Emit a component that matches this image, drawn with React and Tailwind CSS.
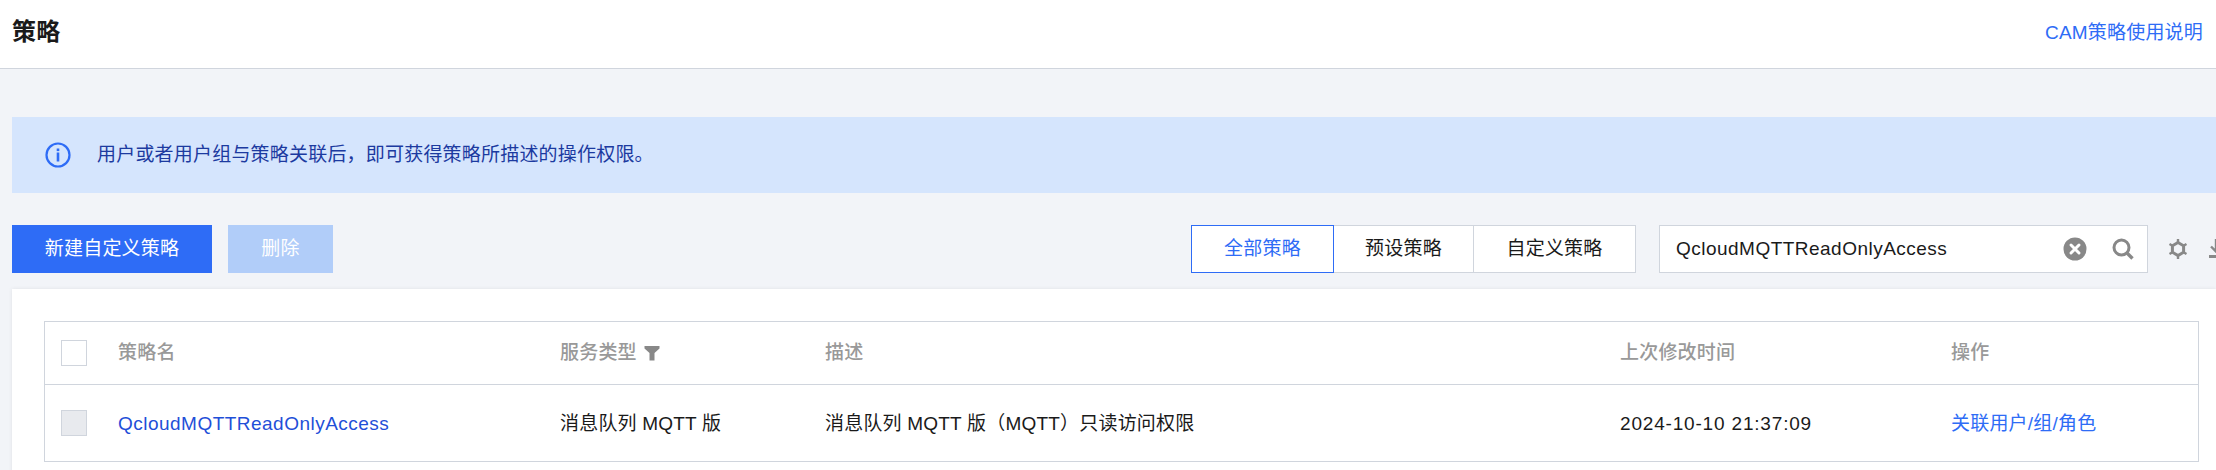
import React from 'react';

const FONT = 'font-["Liberation_Sans","Noto_Sans_CJK_SC",sans-serif]';

const InfoIcon = () => (
  <svg width="26" height="26" viewBox="0 0 26 26" fill="none" className="shrink-0">
    <circle cx="13" cy="13" r="11.5" stroke="#2e6cf6" strokeWidth="2.2" />
    <rect x="11.7" y="10.5" width="2.6" height="9" fill="#2e6cf6" />
    <rect x="11.7" y="6.5" width="2.6" height="2.6" fill="#2e6cf6" />
  </svg>
);

const ClearIcon = () => (
  <svg width="24" height="24" viewBox="0 0 24 24" className="shrink-0">
    <circle cx="12" cy="12" r="11.5" fill="#888888" />
    <path d="M8 8l8 8M16 8l-8 8" stroke="#ffffff" strokeWidth="3" strokeLinecap="round" />
  </svg>
);

const SearchIcon = () => (
  <svg width="22" height="22" viewBox="0 0 22 22" fill="none" className="shrink-0">
    <circle cx="9.5" cy="9.5" r="7.5" stroke="#888888" strokeWidth="3" />
    <path d="M15 15l5.5 5.5" stroke="#888888" strokeWidth="3.4" />
  </svg>
);

const GearIcon = () => (
  <svg width="22" height="22" viewBox="0 0 22 22" fill="none" className="shrink-0">
    <path d="M11 4.5l5.6 3.25v6.5L11 17.5l-5.6-3.25v-6.5z" stroke="#888888" strokeWidth="3" />
    <path d="M11 1v3M11 18v3M2.5 6l2.6 1.5M16.9 14.5l2.6 1.5M2.5 16l2.6-1.5M16.9 7.5L19.5 6" stroke="#888888" strokeWidth="2.4" />
  </svg>
);

const DownloadIcon = () => (
  <svg width="22" height="22" viewBox="0 0 22 22" fill="none" className="shrink-0">
    <path d="M8 1v12M3 8.5l5 5 5-5" stroke="#888888" strokeWidth="2.4" />
    <rect x="1" y="17" width="16" height="3" fill="#888888" />
  </svg>
);

const FilterIcon = () => (
  <svg width="16" height="18" viewBox="0 0 16 18" className="shrink-0">
    <path d="M0.5 2h15v2.4L10.5 9v7.5h-5V9L0.5 4.4z" fill="#888888" />
  </svg>
);

const COLS = 'grid grid-cols-[73px_442px_265px_795px_331px_1fr] items-center';

export default function App() {
  return (
    <div className={`w-[2216px] h-[470px] overflow-hidden bg-[#f2f4f8] text-[19px] tracking-[0.2px] text-[#1a1a1a] ${FONT}`}>
      <div className="h-[69px] bg-white border-b border-[#d0d5dd] flex items-center justify-between pl-[12px] pr-[13px]">
        <h1 className="text-[24px] font-bold leading-none pb-[4px]">策略</h1>
        <a className="text-[#2e6cf6] pb-[1px]">CAM策略使用说明</a>
      </div>

      <div className="mt-[48px] ml-[12px] h-[76px] bg-[#d5e5fd] flex items-center pl-[33px] gap-[26px] text-[#1c3aa0]">
        <InfoIcon />
        <span>用户或者用户组与策略关联后，即可获得策略所描述的操作权限。</span>
      </div>

      <div className="mt-[32px] ml-[12px] h-[48px] flex w-[2230px]">
        <button className="w-[200px] bg-[#2e6cf6] text-white pt-[1px]">新建自定义策略</button>
        <button className="w-[105px] ml-[16px] bg-[#b1cdf9] text-white pt-[1px]">删除</button>
        <div className="flex ml-[858px] bg-white">
          <div className="w-[143px] border border-[#2e6cf6] text-[#2e6cf6] flex items-center justify-center pt-[1px]">全部策略</div>
          <div className="w-[140px] border-y border-r border-[#d0d5dd] flex items-center justify-center pt-[1px]">预设策略</div>
          <div className="w-[162px] border-y border-r border-[#d0d5dd] flex items-center justify-center pt-[1px]">自定义策略</div>
        </div>
        <div className="w-[489px] ml-[23px] bg-white border border-[#d0d5dd] flex items-center pl-[16px] pr-[13px]">
          <span className="flex-1 tracking-[0.48px] pt-[1px]">QcloudMQTTReadOnlyAccess</span>
          <ClearIcon />
          <span className="ml-[25px]"><SearchIcon /></span>
        </div>
        <div className="flex items-center ml-[19px] gap-[19px]">
          <GearIcon />
          <DownloadIcon />
        </div>
      </div>

      <div className="mt-[16px] ml-[12px] h-[200px] bg-white shadow-[0_0_4px_rgba(0,0,0,0.08)] pt-[32px] pl-[32px] pr-[17px]">
        <div className="border border-[#d0d5dd]">
          <div className={`${COLS} h-[63px] border-b border-[#d0d5dd] text-[#999999] font-medium`}>
            <span className="ml-[16px] w-[26px] h-[26px] bg-white border border-[#d0d5dd]" />
            <span>策略名</span>
            <span className="flex items-center gap-[7px]">服务类型 <FilterIcon /></span>
            <span>描述</span>
            <span>上次修改时间</span>
            <span>操作</span>
          </div>
          <div className={`${COLS} h-[76px]`}>
            <span className="ml-[16px] w-[26px] h-[26px] bg-[#e8eaee] border border-[#d0d5dd]" />
            <a className="text-[#1f4fd8] tracking-[0.48px] pt-[2px]">QcloudMQTTReadOnlyAccess</a>
            <span className="pt-[2px]">消息队列 MQTT 版</span>
            <span className="pt-[2px]">消息队列 MQTT 版（MQTT）只读访问权限</span>
            <span className="tracking-[0.82px] pt-[2px]">2024-10-10 21:37:09</span>
            <a className="text-[#2e6cf6] pt-[2px]">关联用户/组/角色</a>
          </div>
        </div>
      </div>
    </div>
  );
}
